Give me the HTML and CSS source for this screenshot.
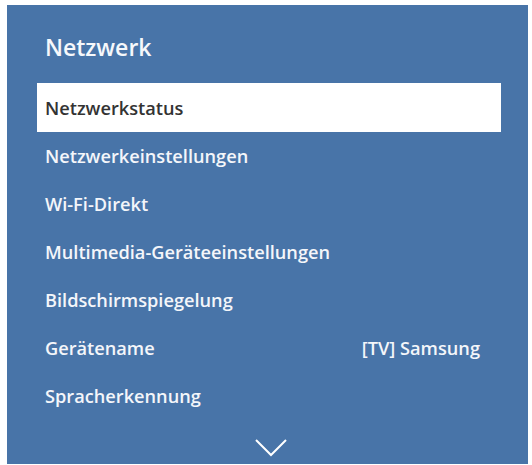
FILE: index.html
```html
<!DOCTYPE html>
<html lang="de">
<head>
<meta charset="utf-8">
<title>Netzwerk</title>
<link rel="stylesheet" href="styles.css">
</head>
<body>
<div class="panel">
  <h1 class="title">Netzwerk</h1>
  <ul class="menu">
    <li class="item selected"><span>Netzwerkstatus</span></li>
    <li class="item"><span>Netzwerkeinstellungen</span></li>
    <li class="item"><span>Wi-Fi-Direkt</span></li>
    <li class="item"><span>Multimedia-Geräteeinstellungen</span></li>
    <li class="item"><span>Bildschirmspiegelung</span></li>
    <li class="item"><span>Gerätename</span><span class="value">[TV] Samsung</span></li>
    <li class="item"><span>Spracherkennung</span></li>
  </ul>
  <div class="more">
    <svg width="32" height="18" viewBox="0 0 32 18"><polyline points="1,1 16,16 31,1" fill="none" stroke="#ffffff" stroke-width="2"/></svg>
  </div>
</div>
</body>
</html>
```
FILE: styles.css
```css
html, body {
  margin: 0;
  padding: 0;
  background: #ffffff;
}
body {
  font-family: "Open Sans", "DejaVu Sans", sans-serif;
}
.panel {
  margin: 5px 4px 0 7px;
  width: 521px;
  height: 459px;
  background: #4874a8;
  box-sizing: border-box;
  padding: 0 27px 0 30px;
  display: flex;
  flex-direction: column;
}
.title {
  margin: 0;
  height: 78px;
  box-sizing: border-box;
  padding: 25px 0 0 8px;
  font-size: 23px;
  font-weight: 600;
  color: #f6f8fb;
  line-height: 34px;
}
.menu {
  list-style: none;
  margin: 0;
  padding: 0;
}
.item {
  height: 48px;
  display: flex;
  align-items: center;
  justify-content: space-between;
  padding: 0 21px 0 8px;
  font-size: 18.2px;
  font-weight: 600;
  color: #f4f6fa;
}
.item.selected {
  height: 49px;
  background: #ffffff;
  color: #333333;
}
.more {
  display: flex;
  justify-content: center;
  padding-top: 19px;
  padding-left: 4px;
}
.more svg {
  display: block;
}
```
